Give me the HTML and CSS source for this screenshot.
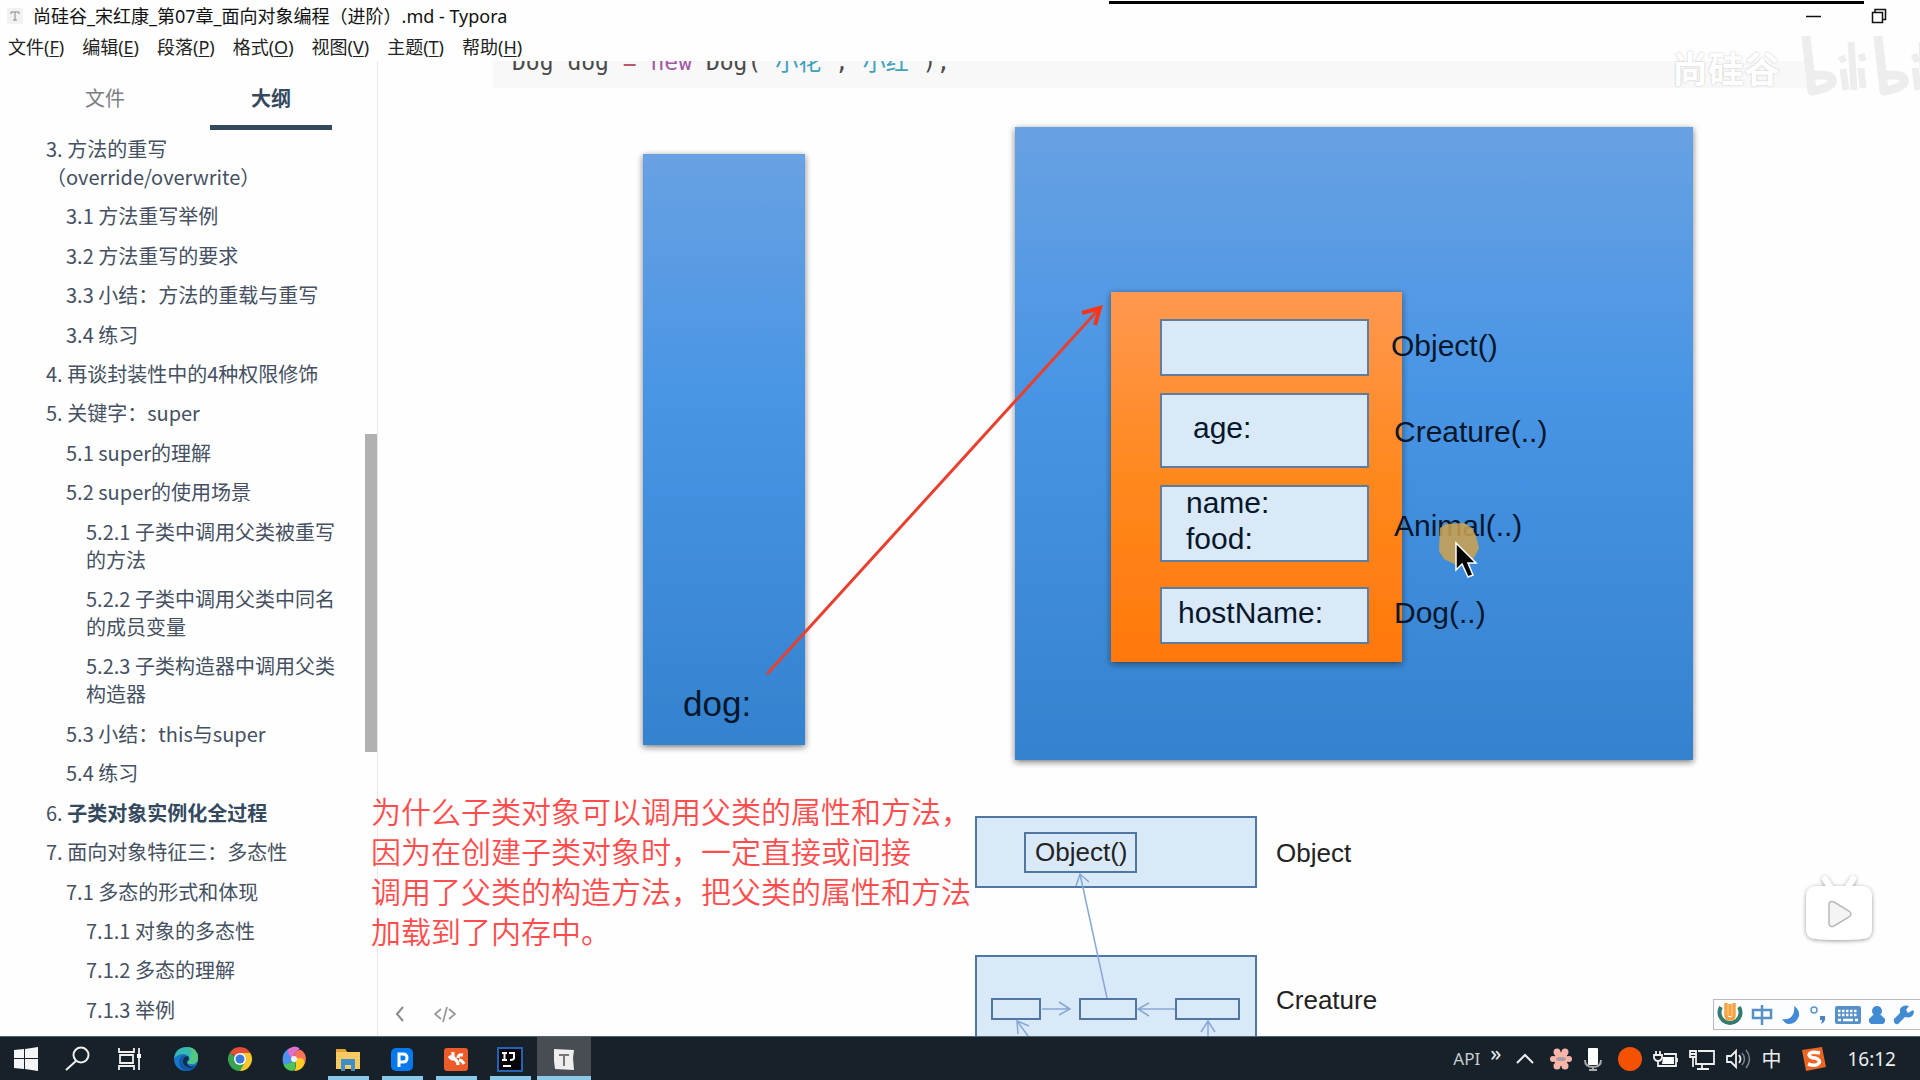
FILE: index.html
```html
<!DOCTYPE html>
<html lang="zh-CN">
<head>
<meta charset="utf-8">
<title>尚硅谷_宋红康_第07章_面向对象编程（进阶）.md - Typora</title>
<link rel="stylesheet" href="styles.css">
</head>
<body>
<header class="titlebar">
  <svg class="app-icon" viewBox="0 0 18 18"><rect x="1" y="1" width="16" height="16" rx="2" fill="#f1f1f1"/><path d="M5 5h8M9 5v8M7 13h4M5 5v2M13 5v2" stroke="#888" fill="none"/></svg>
  <h1 class="title">尚硅谷_宋红康_第07章_面向对象编程（进阶）.md - Typora</h1>
  <div class="window-buttons">
    <button class="window-button" aria-label="最小化"><svg width="16" height="16" viewBox="0 0 16 16"><path d="M0 8.500h15" stroke="#111" stroke-width="1.500"/></svg></button>
    <button class="window-button" aria-label="还原"><svg width="16" height="16" viewBox="0 0 16 16"><path d="M4 4V1.500h10.500v10H12M1.500 4.500h10v10h-10z" fill="none" stroke="#111" stroke-width="1.500"/></svg></button>
  </div>
</header>
<nav class="menubar">
  <button class="menu-item">文件(<u>F</u>)</button>
  <button class="menu-item">编辑(<u>E</u>)</button>
  <button class="menu-item">段落(<u>P</u>)</button>
  <button class="menu-item">格式(<u>O</u>)</button>
  <button class="menu-item">视图(<u>V</u>)</button>
  <button class="menu-item">主题(<u>T</u>)</button>
  <button class="menu-item">帮助(<u>H</u>)</button>
</nav>
<div class="workspace">
  <aside class="sidebar">
    <div class="tabs">
      <button class="tab">文件</button>
      <button class="tab tab-active">大纲</button>
    </div>
    <ul class="outline">
      <li><a href="#s3">3. 方法的重写<br>（override/overwrite）</a></li>
      <li class="level-2"><a href="#s31">3.1 方法重写举例</a></li>
      <li class="level-2"><a href="#s32">3.2 方法重写的要求</a></li>
      <li class="level-2"><a href="#s33">3.3 小结：方法的重载与重写</a></li>
      <li class="level-2"><a href="#s34">3.4 练习</a></li>
      <li><a href="#s4">4. 再谈封装性中的4种权限修饰</a></li>
      <li><a href="#s5">5. 关键字：super</a></li>
      <li class="level-2"><a href="#s51">5.1 super的理解</a></li>
      <li class="level-2"><a href="#s52">5.2 super的使用场景</a></li>
      <li class="level-3"><a href="#s521">5.2.1 子类中调用父类被重写的方法</a></li>
      <li class="level-3"><a href="#s522">5.2.2 子类中调用父类中同名的成员变量</a></li>
      <li class="level-3"><a href="#s523">5.2.3 子类构造器中调用父类构造器</a></li>
      <li class="level-2"><a href="#s53">5.3 小结：this与super</a></li>
      <li class="level-2"><a href="#s54">5.4 练习</a></li>
      <li><a href="#s6">6. <b>子类对象实例化全过程</b></a></li>
      <li><a href="#s7">7. 面向对象特征三：多态性</a></li>
      <li class="level-2"><a href="#s71">7.1 多态的形式和体现</a></li>
      <li class="level-3"><a href="#s711">7.1.1 对象的多态性</a></li>
      <li class="level-3"><a href="#s712">7.1.2 多态的理解</a></li>
      <li class="level-3"><a href="#s713">7.1.3 举例</a></li>
    </ul>
    <div class="scroll-thumb"></div>
  </aside>
  <main class="editor">
    <pre class="code">Dog dog <span class="op">=</span> <span class="kw">new</span> Dog(<span class="str">"小花"</span>,<span class="str">"小红"</span>);</pre>
    <svg class="figure" width="1119" height="650" viewBox="591 118 1119 650">
      <defs>
        <linearGradient id="blue" x2="0" y2="1"><stop stop-color="#68a1e3"/><stop offset=".42" stop-color="#4895e5"/><stop offset="1" stop-color="#3482cf"/></linearGradient>
        <linearGradient id="orange" x2="0" y2="1"><stop stop-color="#ff9850"/><stop offset=".5" stop-color="#ff881e"/><stop offset="1" stop-color="#ff780b"/></linearGradient>
        <filter id="shadow" x="-10%" y="-10%" width="120%" height="120%"><feDropShadow dx="0" dy="2" stdDeviation="3" flood-color="#222" flood-opacity=".6"/></filter>
      </defs>
      <g filter="url(#shadow)"><rect x="643" y="154" width="162" height="591" fill="url(#blue)"/></g>
      <g filter="url(#shadow)"><rect x="1015" y="127" width="678" height="633" fill="url(#blue)"/></g>
      <g filter="url(#shadow)"><rect x="1111" y="292" width="291" height="370" fill="url(#orange)"/></g>
      <g fill="#d9e9f8" stroke="#5f7d9e" stroke-width="2">
        <rect x="1161" y="320" width="207" height="55"/>
        <rect x="1161" y="394" width="207" height="73"/>
        <rect x="1161" y="486" width="207" height="75"/>
        <rect x="1161" y="588" width="207" height="55"/>
      </g>
      <path d="M767 674L1099 309" fill="none" stroke="#e8402e" stroke-width="3"/>
      <path d="M1082 313l18-5-5 17" fill="none" stroke="#fa3414" stroke-width="4"/>
      <text class="label-xl" x="683" y="716">dog:</text>
      <g class="label-lg">
        <text x="1193" y="438">age:</text>
        <text x="1186" y="513">name:</text>
        <text x="1186" y="549">food:</text>
        <text x="1178" y="623">hostName:</text>
        <text x="1391" y="356">Object()</text>
        <text x="1394" y="442">Creature(..)</text>
        <text x="1394" y="536">Animal(..)</text>
        <text x="1394" y="623">Dog(..)</text>
      </g>
      <path d="M1440 528l6-4 18-1 8 5 4 8 3 12-5 10-8 7-12-1-10-5-5-8z" fill="#cfa24c" fill-opacity=".85"/>
      <path d="M1456 543v27l6-6 6 13 5-2-5-12h8z" fill="#060606" stroke="#fff" stroke-width="1.500"/>
    </svg>
    <svg class="figure" width="515" height="300" viewBox="893 800 515 300">
      <g fill="#d9e9f8" stroke="#5077a3" stroke-width="2">
        <rect x="976" y="817" width="280" height="70"/>
        <rect x="976" y="956" width="280" height="140"/>
        <rect x="1025" y="833" width="111" height="39"/>
        <rect x="992" y="999" width="48" height="20"/>
        <rect x="1080" y="999" width="56" height="20"/>
        <rect x="1176" y="999" width="63" height="20"/>
      </g>
      <path d="M1107 998L1080 874M1076 886l4-12 9 8M1042 1009h28M1059 1002l11 7-11 6M1175 1009h-37M1149 1003l-11 6 11 7M1034 1044l-17-23M1018 1034l-1-13 12 5M1208 1044v-23M1201 1032l7-11 7 11" fill="none" stroke="#86a8d6" stroke-width="1.500"/>
      <g class="label-md">
        <text x="1035" y="861">Object()</text>
        <text x="1276" y="862">Object</text>
        <text x="1276" y="1009">Creature</text>
      </g>
    </svg>
    <div class="editor-tools">
      <button class="tool" aria-label="隐藏侧边栏"><svg width="12" height="18" viewBox="0 0 12 18"><path d="M9 2L3 9l6 7" fill="none" stroke="#8a8a8a" stroke-width="2"/></svg></button>
      <button class="tool" aria-label="源代码模式"><svg width="22" height="18" viewBox="0 0 22 18"><path d="M7 4L1 9l6 5M15 4l6 5-6 5M13 2L9 17" fill="none" stroke="#999" stroke-width="1.800"/></svg></button>
    </div>
  </main>
  <p class="annotation">为什么子类对象可以调用父类的属性和方法，<br>因为在创建子类对象时，一定直接或间接<br>调用了父类的构造方法，把父类的属性和方法<br>加载到了内存中。</p>
  <button class="player-button" aria-label="播放"><svg width="80" height="76" viewBox="0 0 80 76">
    <defs><filter id="soft" x="-20%" y="-20%" width="140%" height="140%"><feDropShadow dx="0" dy="1" stdDeviation="2" flood-color="#000" flood-opacity=".4"/></filter></defs>
    <g filter="url(#soft)"><path d="M26 8l7 11M54 8l-7 11" stroke="#fff" stroke-width="6" stroke-linecap="round"/><path d="M18 15h44q11 0 11 12v30q0 11-11 11-22 2-44 0Q7 68 7 57V27q0-12 11-12z" fill="#fff"/></g>
    <path d="M30 34q0-5 5-3l15 9q4 3 0 6l-15 9q-5 2-5-3z" fill="#f4f4f4" stroke="#b8b8b8" stroke-width="1.500"/></svg></button>
  <div class="ime">
    <svg width="26" height="26" viewBox="0 0 26 26"><path d="M4 5a10.500 10.500 0 1 0 18 0" fill="none" stroke="#327b70" stroke-width="4"/><path d="M9 1v12q0 4 4 4t4-4V1M13 2v12" fill="none" stroke="#f6a340" stroke-width="3.500"/></svg>
    <svg width="22" height="22" viewBox="0 0 22 22"><path d="M2 6h18v8H2zM11 1v20" fill="none" stroke="#5590c4" stroke-width="2.500"/></svg>
    <svg width="20" height="20" viewBox="0 0 20 20"><path d="M13 1q6 4 5 10-3 8-10 8-4 0-7-5 7 1 10-3 3-4 2-10z" fill="#438ad5"/></svg>
    <svg width="18" height="20" viewBox="0 0 18 20"><circle cx="5" cy="5" r="3" fill="none" stroke="#5c94c8" stroke-width="1.500"/><path d="M11 11h5q1 6-4 8 1-2 1-4h-2z" fill="#4a83c5"/></svg>
    <svg width="26" height="20" viewBox="0 0 26 20"><rect x="0" y="1" width="26" height="18" rx="2" fill="#5590c8"/><path d="M3 6h20M3 10h20" stroke="#fff" stroke-width="2.500" stroke-dasharray="2.500 1.500"/><path d="M3 15h3M8 15h10M20 15h3" stroke="#fff" stroke-width="2.500"/></svg>
    <svg width="16" height="20" viewBox="0 0 16 20"><circle cx="8" cy="6" r="5" fill="#438ad5"/><path d="M4 10h8l4 4v3l-2 2H2l-2-2v-3z" fill="#438ad5"/></svg>
    <svg width="22" height="20" viewBox="0 0 22 20"><path d="M20 5l-5 3-2-3 3-4q-6-2-9 3v4l-6 6q-1 4 2 5 2 1 4-2l5-5q8 2 9-5z" fill="#438ad5"/></svg>
  </div>
</div>
<footer class="taskbar">
  <div class="system">
    <button class="task" aria-label="开始"><svg width="26" height="26" viewBox="0 0 26 26"><path d="M1 4l10-1v9H1zM12 3l13-2v11H12zM1 13h10v10L1 22zM12 13h13v12l-13-2z" fill="#f5f5f5"/></svg></button>
    <button class="task" aria-label="搜索"><svg width="26" height="26" viewBox="0 0 26 26"><circle cx="16" cy="9" r="7.500" fill="none" stroke="#eee" stroke-width="2"/><path d="M11 15L1 24" stroke="#eee" stroke-width="2"/></svg></button>
    <button class="task" aria-label="任务视图"><svg width="26" height="26" viewBox="0 0 26 26"><path d="M2 2v4h15V2M2 24v-4h15v4M3 9h13v8H3zM22 2v22" fill="none" stroke="#eee" stroke-width="1.800"/><path d="M20 8h4v4h-4z" fill="#fff"/></svg></button>
  </div>
  <div class="apps">
    <button class="task" aria-label="Edge"><svg width="26" height="26" viewBox="0 0 26 26"><circle cx="13" cy="13" r="12" fill="#1678c9"/><path d="M1 12Q3 1 14 1q11 1 11 11 0 6-7 6-4 0-3-2 3-3 0-6-5-5-14 2z" fill="#38b8b0"/><path d="M15 1q10 1 10 11 0 6-7 6-4 0-3-2 4-3 2-7 4-4-2-8z" fill="#54c882"/><path d="M15 10q-6 0-5 7 2 5 8 5 3 0 5-3-5 3-8 0-2-2-1-4 3-2 1-5z" fill="#102e48"/><path d="M10 17q-1-5 3-8-6 0-7 6 0 8 7 10 6 0 9-4-8 3-12-4z" fill="#1458ac"/></svg></button>
    <button class="task" aria-label="Chrome"><svg width="26" height="26" viewBox="0 0 26 26"><path d="M13 13L2.600 7A12 12 0 0 1 23.400 7z" fill="#e34f35"/><path d="M13 13V7h10.400A12 12 0 0 1 13 25z" fill="#f7c52c"/><path d="M13 13l4 5-4 7A12 12 0 0 1 2.600 7z" fill="#37a34f"/><circle cx="13" cy="13" r="6" fill="#fff"/><circle cx="13" cy="13" r="4.500" fill="#3979df"/></svg></button>
    <button class="task" aria-label="浏览器"><svg width="26" height="26" viewBox="0 0 26 26"><g><path d="M13 13Q5 11 7 3q8-5 12 0-6 2-6 10z" fill="#dc71ce"/><path d="M13 13q0-10 7-9 7 5 4 13-2-6-11-4z" fill="#ff7158"/><path d="M13 13q10-3 11 4-3 8-11 8 4-5 0-12z" fill="#ffcb24"/><path d="M13 13q4 9-1 12-8 0-10-8 6 2 11-4z" fill="#4bc55a"/><path d="M13 13q-7 8-11 4-2-9 5-14-1 7 6 10z" fill="#4d91ee"/></g><circle cx="13" cy="13" r="3" fill="#eef"/></svg></button>
    <button class="task task-open" aria-label="文件资源管理器"><svg width="26" height="26" viewBox="0 0 26 26"><path d="M1 3h9l2 3h13v17H1z" fill="#f9ca61"/><path d="M1 3h9l2 3H1z" fill="#e5a32d"/><path d="M6 13h14v12h-4v-6h-6v6H6z" fill="#3d8fc9"/></svg></button>
    <button class="task task-open" aria-label="P"><svg width="24" height="26" viewBox="0 0 24 26"><rect x="1" y="2" width="22" height="23" rx="5" fill="#0878ed"/><path d="M9 21V8h4q4 0 4 4t-4 4h-3" fill="none" stroke="#fff" stroke-width="3"/></svg></button>
    <button class="task task-open" aria-label="XMind"><svg width="26" height="26" viewBox="0 0 26 26"><rect x="1" y="2" width="24" height="23" rx="3" fill="#ed5b28"/><path d="M10 6q-1 6 3 8 2 2 2 5M6 10q2 3 5 3M20 9q-5-1-5 3M16 14q3 0 5 4" fill="none" stroke="#fff" stroke-width="3.200"/></svg></button>
    <button class="task task-open" aria-label="IntelliJ IDEA"><svg width="26" height="26" viewBox="0 0 26 26"><rect x="1" y="2" width="24" height="23" fill="#05050a" stroke="#2462b5" stroke-width="2"/><path d="M5 7h5M7.500 7v7M5 14h5M12 7h5v5q0 2-4 2M6 20h8" fill="none" stroke="#fff" stroke-width="2"/></svg></button>
    <button class="task task-open task-current" aria-label="Typora"><svg width="24" height="26" viewBox="0 0 24 26"><path d="M2 3l20 1-1 8 1 12-19-1-1-8z" fill="#eee"/><path d="M7 9h10M12 9v11" stroke="#777" stroke-width="2"/></svg></button>
  </div>
  <div class="tray">
    <span class="api">API</span>
    <span class="more">»</span>
    <svg class="caret" width="20" height="26" viewBox="0 0 20 26"><path d="M2 17l8-8 8 8" fill="none" stroke="#eee" stroke-width="2"/></svg>
    <svg width="24" height="26" viewBox="0 0 24 26"><g fill="#f8b5a8"><circle cx="8" cy="6" r="3.500"/><circle cx="16" cy="6" r="3.500"/><circle cx="20" cy="13" r="3"/><circle cx="16" cy="20" r="3.500"/><circle cx="8" cy="20" r="3.500"/><circle cx="4" cy="13" r="3"/><circle cx="12" cy="13" r="7"/></g><ellipse cx="12" cy="13" rx="5" ry="2" fill="#a79ba8"/></svg>
    <svg width="20" height="26" viewBox="0 0 20 26"><rect x="5" y="2" width="10" height="17" rx="1" fill="#fff"/><path d="M2 14q0 7 8 7t8-7M10 21v3M6 24h8" fill="none" stroke="#aaa" stroke-width="2"/></svg>
    <svg width="30" height="26" viewBox="0 0 30 26"><circle cx="17" cy="13" r="12" fill="#f45100"/></svg>
    <svg width="26" height="26" viewBox="0 0 26 26"><path d="M3 5v4M7 5v4M1 9h8v3q-1 3-4 3t-4-3zM5 15v5h18V8H11M24 12v4" fill="none" stroke="#eee" stroke-width="1.800"/><path d="M10 11h11v7H9z" fill="#fff"/></svg>
    <svg width="26" height="26" viewBox="0 0 26 26"><path d="M9 5h16v13H7v-6M13 18v5M8 23h12M1 5h6v6H1zM1 8h6M4 11v10" fill="none" stroke="#eee" stroke-width="1.800"/></svg>
    <svg width="26" height="26" viewBox="0 0 26 26"><path d="M2 10h4l5-5v16l-5-5H2zM14 9q3 4 0 8" fill="none" stroke="#eee" stroke-width="1.800"/><path d="M17 7q5 6 0 12M21 4q7 9 0 18" fill="none" stroke="#78838a" stroke-width="1.500"/></svg>
    <span class="lang">中</span>
    <svg width="26" height="26" viewBox="0 0 26 26"><path d="M1 4l20-3 4 20-20 4z" fill="#ee6522"/><path d="M19 7q-10-2-11 2 1 3 6 3 6 2 4 5-3 4-11 1" fill="none" stroke="#fff" stroke-width="3.500"/></svg>
    <time class="clock">16:12</time>
  </div>
</footer>
<div class="progress-line"></div>
<div class="watermark">
  <span class="watermark-name">尚硅谷</span>
  <svg class="watermark-logo" width="124" height="66" viewBox="0 0 124 66"><g fill="none" stroke="#ededed" stroke-width="9" stroke-linejoin="round"><path d="M6 2l6 55q23-4 20-12-3-6-20-3"/><path d="M41 22l3 6M43 35l3 21M51 8l3 48M61 20l2 7M61 34l2 20" stroke-width="7"/><path d="M78 2l6 55q23-4 20-12-3-6-20-3"/><path d="M114 20l3 8M115 34l3 22M122 8l2 48" stroke-width="7"/></g></svg>
</div>
</body>
</html>
```
FILE: styles.css
```css
* { box-sizing: border-box; }
body {
  margin: 0;
  height: 100vh;
  display: flex;
  flex-direction: column;
  position: relative;
  overflow: hidden;
  background: #fefefe;
  color: #111;
  font-family: "Noto Sans", "Noto Sans CJK SC", sans-serif;
}
button {
  margin: 0;
  padding: 0;
  border: 0;
  background: none;
  color: inherit;
  font: inherit;
}
a { color: inherit; text-decoration: none; }
svg { display: block; flex: none; }

.titlebar { flex: none; display: flex; align-items: center; height: 32px; padding: 0 32px 0 6px; }
.app-icon { width: 18px; height: 18px; }
.title { flex: 1; margin: 0 0 0 9px; font-size: 18px; line-height: 32px; font-weight: 400; }
.window-buttons { display: flex; gap: 48px; }
.window-button { width: 17px; height: 20px; }

.menubar { flex: none; display: flex; gap: 18px; height: 29px; padding-left: 8px; color: #222; }
.menu-item { font-size: 18px; line-height: 28px; }
.menu-item u { text-underline-offset: 2px; }

.workspace { flex: 1; min-height: 0; display: flex; position: relative; }
.sidebar {
  flex: none;
  width: 378px;
  display: flex;
  flex-direction: column;
  position: relative;
  border-right: 1px solid #e8e8ec;
  color: #455062;
  font-family: "Noto Sans CJK SC", sans-serif;
  font-size: 20px;
}
.tabs { display: flex; gap: 44px; padding-left: 44px; }
.tab { width: 122px; height: 69px; padding-top: 8px; border-bottom: 5px solid transparent; color: #7d7d84; }
.tab-active { border-color: #34495e; color: #34495e; font-weight: 700; }
.outline {
  flex: 1;
  display: flex;
  flex-direction: column;
  justify-content: space-between;
  margin: 0;
  padding: 5px 40px 12px 46px;
  list-style: none;
  line-height: 28px;
}
.outline .level-2 { padding-left: 20px; }
.outline .level-3 { padding-left: 40px; }
.outline b { color: #34495e; }
.scroll-thumb { position: absolute; right: 0; top: 373px; width: 12px; height: 318px; background: #b1b1b1; }

.editor { flex: 1; min-width: 0; position: relative; overflow: hidden; padding: 0 112px 0 115px; }
.code {
  margin: -13px 0 30px;
  padding: 0 19px 12px;
  background: #f8f8f8;
  color: #4a4a4a;
  font: 23px/28px "DejaVu Sans Mono", "Noto Sans CJK SC", monospace;
}
.op { color: #b85a6b; }
.kw { color: #a15aa8; }
.str { color: #3fa0bd; }
.figure { margin: 0 auto 32px; font-family: "Liberation Sans", sans-serif; fill: #07172b; }
.label-md { font-size: 26px; fill: #222; }
.label-lg { font-size: 30px; }
.label-xl { font-size: 35px; }
.editor-tools { position: absolute; left: 16px; bottom: 13px; display: flex; gap: 28px; }

.annotation {
  position: absolute;
  left: 371px;
  top: 729px;
  margin: 0;
  color: #ff4d4d;
  font: 30px/40px "Noto Sans CJK SC", sans-serif;
  font-weight: 350;
  white-space: nowrap;
}
.player-button { position: absolute; right: 41px; bottom: 89px; }
.ime {
  position: absolute;
  right: 0;
  bottom: 6px;
  display: flex;
  align-items: center;
  gap: 8px;
  height: 31px;
  width: 207px;
  padding-left: 3px;
  overflow: hidden;
  border: 1px solid #bbb;
  border-right: 0;
  background: #fbfdff;
}

.taskbar { flex: none; display: flex; height: 44px; background: #17212a; color: #eee; border-top: 1px solid #52656b; }
.system { display: flex; width: 159px; }
.system .task { width: 52px; }
.apps { display: flex; }
.task { width: 54px; display: flex; align-items: center; justify-content: center; }
.task-open { background: linear-gradient(#8bc9e9, #8bc9e9) center bottom / 41px 4px no-repeat; }
.task-current { background: linear-gradient(#8bc9e9, #8bc9e9) center bottom / 100% 4px no-repeat #474d53; }
.tray { display: flex; align-items: center; gap: 10px; margin-left: auto; padding-right: 24px; }
.api { font-size: 17px; color: #c8cdd0; }
.more { font-size: 22px; line-height: 22px; padding-bottom: 14px; margin-right: 4px; }
.caret { margin-right: 4px; }
.lang { width: 22px; font-size: 20px; margin-right: 8px; }
.clock { font-size: 19px; margin-left: 10px; }

.progress-line { position: absolute; top: 1px; left: 1109px; right: 56px; height: 3px; background: #000; }
.watermark { position: absolute; top: 34px; right: -4px; display: flex; align-items: center; gap: 20px; }
.watermark-name { color: #fff; font: 700 36px/44px "Noto Sans CJK SC", sans-serif; text-shadow: 0 0 2px #bbb; }
```
